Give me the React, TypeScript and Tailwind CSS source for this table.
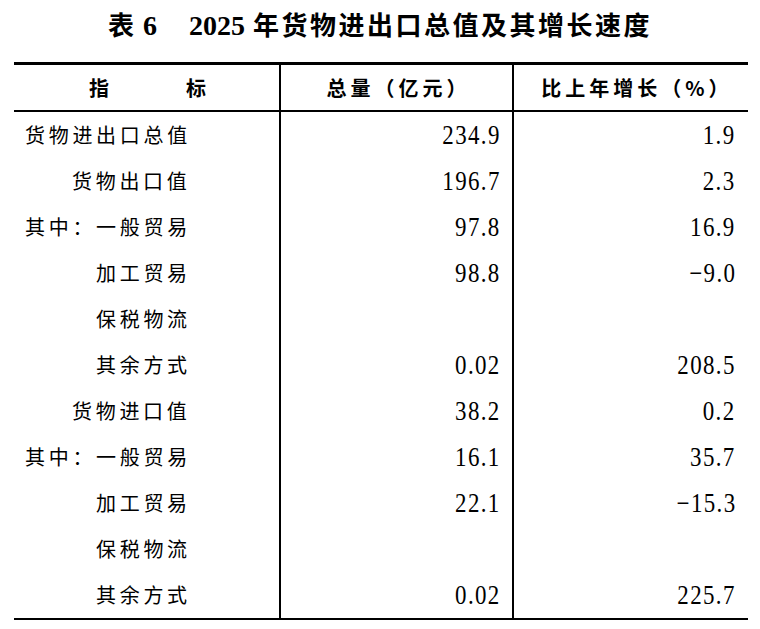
import React from 'react';

type Row = {
  label: string;
  indent: 0 | 2 | 3;
  total?: string;
  growth?: string;
};

const rows: Row[] = [
  { label: '货物进出口总值', indent: 0, total: '234.9', growth: '1.9' },
  { label: '货物出口值', indent: 2, total: '196.7', growth: '2.3' },
  { label: '其中：一般贸易', indent: 0, total: '97.8', growth: '16.9' },
  { label: '加工贸易', indent: 3, total: '98.8', growth: '−9.0' },
  { label: '保税物流', indent: 3 },
  { label: '其余方式', indent: 3, total: '0.02', growth: '208.5' },
  { label: '货物进口值', indent: 2, total: '38.2', growth: '0.2' },
  { label: '其中：一般贸易', indent: 0, total: '16.1', growth: '35.7' },
  { label: '加工贸易', indent: 3, total: '22.1', growth: '−15.3' },
  { label: '保税物流', indent: 3 },
  { label: '其余方式', indent: 3, total: '0.02', growth: '225.7' },
];

const cjk = "font-['Noto_Sans_CJK_SC',sans-serif]";
const num = "font-['Liberation_Serif','Noto_Sans_CJK_SC',serif]";

const indentClass = {
  0: 'pl-[11px]',
  2: 'pl-[58px]',
  3: 'pl-[82px]',
};

// condensed, tall digits like the printed table
const Num = ({ value }: { value?: string }) =>
  value ? (
    <span className={`inline-block origin-right scale-x-85 ${num} text-[27px] leading-none tracking-[1.6px]`}>
      {value}
    </span>
  ) : null;

const App = () => {
  return (
    <div className="w-[760px] h-[629px] bg-white text-black overflow-hidden">
      {/* Title */}
      <div className="h-[62px] pt-[9px] flex justify-center items-baseline font-bold leading-[30px]">
        <span className={`${cjk} text-[26px]`}>表</span>
        <span className={`${num} text-[28px] ml-[9px]`}>6</span>
        <span className={`${num} text-[28px] ml-[32px]`}>2025</span>
        <span className={`${cjk} text-[26px] tracking-[2.5px] ml-[8px]`}>年货物进出口总值及其增长速度</span>
      </div>

      {/* Table */}
      <div className="ml-[14px] w-[734px] border-t-[3px] border-b-2 border-black">
        {/* Header */}
        <div className={`flex h-[47px] border-b-2 border-black ${cjk} font-bold text-[20px]`}>
          <div className="w-[267px] border-r-2 border-black flex items-center justify-center gap-[77px] pl-[2px]">
            <span>指</span>
            <span>标</span>
          </div>
          <div className="w-[233px] border-r-2 border-black flex items-center justify-center tracking-[4px] pl-[4px]">
            总量（亿元）
          </div>
          <div className="flex-1 flex items-center justify-center tracking-[4px] pl-[12px]">
            比上年增长（%）
          </div>
        </div>

        {/* Body */}
        {rows.map((row, i) => (
          <div key={i} className="flex h-[46px]">
            <div
              className={`w-[267px] border-r-2 border-black flex items-center ${indentClass[row.indent]} ${cjk} text-[20px] tracking-[3.7px]`}
            >
              {row.label}
            </div>
            <div className="w-[233px] border-r-2 border-black flex items-center justify-end pr-[11px]">
              <Num value={row.total} />
            </div>
            <div className="flex-1 flex items-center justify-end pr-[12px]">
              <Num value={row.growth} />
            </div>
          </div>
        ))}
      </div>
    </div>
  );
};

export default App;
